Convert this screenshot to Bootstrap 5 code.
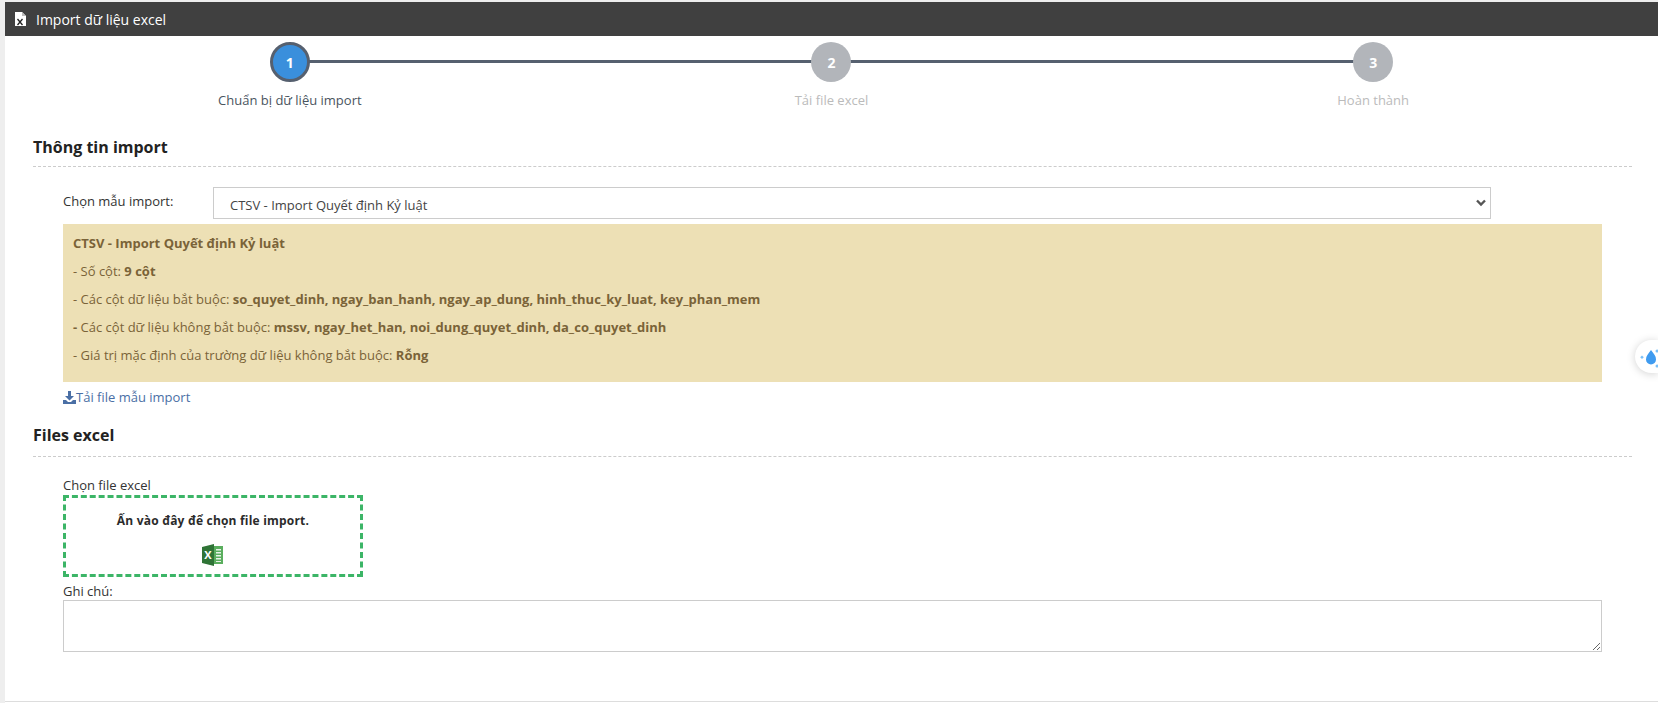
<!DOCTYPE html>
<html lang="vi">
<head>
<meta charset="utf-8">
<title>Import dữ liệu excel</title>
<link rel="stylesheet" href="https://cdn.jsdelivr.net/npm/bootstrap@5.3.0/dist/css/bootstrap.min.css">
<style>
html,body{height:100%;overflow:hidden}
body{background:#eee;font-family:"Open Sans","Noto Sans",sans-serif;font-size:13px;color:#333;padding:2px 0 0 5px;position:relative}
.sheet{background:#fff;height:701px}
.endline{height:1px;background:#ddd;margin-top:49px}
.topbar{height:34px;background:#404040;color:#fff;font-size:14px;padding-left:9px;gap:9px}
.stepper{display:grid;grid-template-columns:repeat(3,1fr);margin:0 14px;height:100px;padding-top:6px}
.stepitem{position:relative;text-align:center;color:#bbb}
.stepitem:not(:last-child)::after{content:"";position:absolute;top:18px;left:50%;width:100%;height:3px;background:#56606f}
.stepdot{position:relative;z-index:1;width:40px;height:40px;border-radius:50%;background:#b2b5ba;color:#fff;font-weight:700;font-size:14px;margin:0 auto 9px;display:flex;align-items:center;justify-content:center}
.stepitem.now{color:#4a5560}
.stepitem.now .stepdot{background:#3a8fdc;border:3px solid #56606f}
.secttl{margin:0 26px 0 28px;font-size:16px;font-weight:700;color:#222;line-height:22px;padding-bottom:8px;border-bottom:1px dashed #ccc}
.inner{margin:0 56px 0 58px}
.pickrow{height:32px;margin-top:20px;gap:0}
.picklab{width:150px;line-height:29px;flex:none}
.picksel{width:1278px;height:32px;border:1px solid #ccc;border-radius:0;font-size:13px;color:#444;padding:5px 16px 0;background-size:12px 10px;background-position:right 3px center;box-shadow:none;background-image:url("data:image/svg+xml,%3csvg xmlns='http://www.w3.org/2000/svg' viewBox='0 0 12 10'%3e%3cpath fill='none' stroke='%23555' stroke-width='2.400' d='M2 2.500 6 6.500l4-4'/%3e%3c/svg%3e")}
.notebox{margin-top:5px;height:158px;background:#ede0b5;color:#7a6338;padding:0 10px;border-radius:0}
.notebox p{margin:0;line-height:28px}
.notebox p:first-child{padding-top:5px;line-height:28px;height:33px}
.tplink{display:inline-flex;align-items:center;color:#4a6fa5;text-decoration:none;line-height:20px;margin-top:5px}
.ttl2{margin-top:15px;padding-bottom:10px}
.filelab{margin-top:18px;line-height:20px}
.dropper{width:300px;height:82px;border:3px dashed #3cb567;text-align:center;font-size:12px;font-weight:700;color:#2b2b2b;padding-top:14px;letter-spacing:.2px}
.dropper svg{display:block;margin:14px auto 0}
.notelab{line-height:17px;margin-top:6px}
.notearea{display:block;width:100%;height:52px;border:1px solid #ccc;border-radius:0;box-shadow:none}
.floater{position:absolute;right:0;top:340px;width:23px;height:33px;background:#fff;border-radius:17px 0 0 17px;box-shadow:0 1px 8px rgba(0,0,0,.18);overflow:hidden}
</style>
</head>
<body>
<div class="sheet">
  <div class="topbar d-flex align-items-center">
    <svg width="13" height="16" viewBox="0 0 13 16"><path fill="#fff" d="M1 1h7l4 4v10H1z"/><path fill="#bbb" d="M8 1l4 4H8z"/><path stroke="#222" stroke-width="1.300" fill="none" d="M3.500 8l5 6M8.500 8l-5 6"/></svg>
    <span>Import dữ liệu excel</span>
  </div>
  <div class="stepper">
    <div class="stepitem now"><div class="stepdot">1</div>Chuẩn bị dữ liệu import</div>
    <div class="stepitem"><div class="stepdot">2</div>Tải file excel</div>
    <div class="stepitem"><div class="stepdot">3</div>Hoàn thành</div>
  </div>
  <div class="secttl">Thông tin import</div>
  <div class="inner">
    <div class="d-flex pickrow">
      <label class="picklab">Chọn mẫu import:</label>
      <select class="form-select picksel"><option>CTSV - Import Quyết định Kỷ luật</option></select>
    </div>
    <div class="notebox">
      <p><b>CTSV - Import Quyết định Kỷ luật</b></p>
      <p>- Số cột: <b>9 cột</b></p>
      <p>- Các cột dữ liệu bắt buộc: <b>so_quyet_dinh, ngay_ban_hanh, ngay_ap_dung, hinh_thuc_ky_luat, key_phan_mem</b></p>
      <p><b>-</b> Các cột dữ liệu không bắt buộc: <b>mssv, ngay_het_han, noi_dung_quyet_dinh, da_co_quyet_dinh</b></p>
      <p>- Giá trị mặc định của trường dữ liệu không bắt buộc: <b>Rỗng</b></p>
    </div>
    <a class="tplink" href="#"><svg width="13" height="13" viewBox="0 0 13 13"><path fill="#4a6fa5" d="M5 0h3v5h3L6.500 9.500 2 5h3zM0 9h3l2 2h3l2-2h3v4H0z"/></svg>Tải file mẫu import</a>
  </div>
  <div class="secttl ttl2">Files excel</div>
  <div class="inner">
    <div class="filelab">Chọn file excel</div>
    <div class="dropper">Ấn vào đây để chọn file import.
      <svg width="22" height="22" viewBox="0 0 22 22"><path fill="#5aae5e" d="M7 2h14v18H7z"/><path fill="#e8f3e8" d="M14 5h5v1.500h-5zM14 8h5v1.500h-5zM14 11h5v1.500h-5zM14 14h5v1.500h-5zM14 17h5v1h-5z"/><path fill="#2f7436" d="M0 3l12-3v22L0 19z"/><text x="6" y="15" text-anchor="middle" font-size="11" font-weight="700" fill="#fff" font-family="Open Sans">X</text></svg>
    </div>
    <div class="notelab">Ghi chú:</div>
    <textarea class="form-control notearea"></textarea>
  </div>
  <div class="endline"></div>
</div>
<div class="floater">
  <svg width="23" height="33" viewBox="0 0 23 33"><path fill="#3f9bf0" d="M16 10c3 4 5 6 5 9.500a5 5 0 0 1-10 0c0-3.500 2-5.500 5-9.500z"/><path fill="#7cc0f7" d="M7 15.500l1.800 1.800L7 19.100l-1.800-1.800z"/><circle cx="22" cy="11" r="1.500" fill="#7cc0f7"/><circle cx="22" cy="26" r="1.500" fill="#7cc0f7"/></svg>
</div>
<script src="https://cdn.jsdelivr.net/npm/bootstrap@5.3.0/dist/js/bootstrap.bundle.min.js"></script>
</body>
</html>
